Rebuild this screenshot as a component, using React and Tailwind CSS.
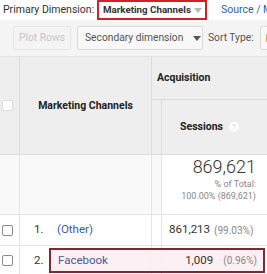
import React from 'react'

const Caret = ({ className = '' }) => (
  <svg width="8" height="5" viewBox="0 0 8 5" className={`shrink-0 ${className}`}>
    <path d="M0 0h8L4 5z" fill="currentColor" />
  </svg>
)

const Check = ({ light = false }) => (
  <div
    className={`w-[11px] h-[11px] rounded-[2px] border bg-white ${
      light ? 'border-[#dcdcdc]' : 'border-[#8a8a8a]'
    }`}
  />
)

export default function App() {
  return (
    <div
      className="w-[267px] h-[274px] overflow-hidden bg-white text-[#333] relative"
      style={{ fontFamily: 'Roboto, "Liberation Sans", sans-serif' }}
    >
      {/* Primary dimension bar */}
      <div className="h-[20px] flex items-center text-[10.5px] whitespace-nowrap overflow-hidden">
        <span className="ml-[3px] w-[94px] shrink-0">Primary Dimension:</span>
        <div className="h-[20px] w-[110px] shrink-0 border-2 border-[#d0202a] flex items-center pl-[4px] gap-[3px]">
          <span className="font-bold text-[9.75px] text-[#333]">Marketing Channels</span>
          <Caret className="text-[#b8b8b8]" />
        </div>
        <span className="ml-[14px] shrink-0 text-[#2f5fb3]">Source / M</span>
      </div>

      {/* Toolbar */}
      <div className="h-[37px] bg-[#f4f4f4] border-b border-[#e2e2e2] flex items-center pl-[13px] text-[10.25px] whitespace-nowrap overflow-hidden">
        <div className="shrink-0 h-[24px] w-[58px] rounded-[2px] border border-[#e6e6e6] bg-[#f4f4f4] flex items-center justify-center text-[#c6c6c6]">
          Plot Rows
        </div>
        <div className="shrink-0 ml-[6px] h-[24px] w-[126px] rounded-[2px] border border-[#dadada] bg-[#f8f8f8] flex items-center pl-[7px] gap-[10px] text-[#555]">
          <span>Secondary dimension</span>
          <Caret className="text-[#555]" />
        </div>
        <span className="shrink-0 ml-[5px] text-[#555]">Sort Type:</span>
        <div className="shrink-0 ml-[6px] h-[24px] w-[20px] rounded-[2px] border border-[#dadada] bg-[#f8f8f8] flex items-center pl-[5px]">
          <div className="w-[3px] h-[8px] bg-[#f0a040] rounded-[1px]" />
        </div>
      </div>

      {/* Table header */}
      <div className="grid grid-cols-[20px_132px_10px_1fr] grid-rows-[43px_54px] bg-[#eeeeee] border-b border-[#dcdcdc]">
        <div className="row-span-2 border-r border-[#dcdcdc] flex items-center pl-[2px]">
          <Check light />
        </div>
        <div className="row-span-2 border-r border-[#dcdcdc] flex items-center justify-center font-bold text-[10.5px] text-[#222]">
          Marketing Channels
        </div>
        <div className="col-span-2 border-b border-[#dcdcdc] flex items-center pl-[5px] font-bold text-[10.5px] text-[#222]">
          Acquisition
        </div>
        <div className="border-r border-[#dcdcdc]" />
        <div className="flex items-center pl-[18px] gap-[6px] font-bold text-[10.5px] text-[#222]">
          Sessions
          <span className="w-[10px] h-[10px] rounded-full bg-white text-[#d8d8d8] text-[7px] font-bold flex items-center justify-center">
            ?
          </span>
        </div>
      </div>

      {/* Totals row */}
      <div className="grid grid-cols-[20px_132px_10px_1fr] h-[60px] border-b border-[#e4e4e4] bg-[#f9f9f9]">
        <div className="border-r border-[#e4e4e4]" />
        <div className="border-r border-[#e4e4e4]" />
        <div className="border-r border-[#e4e4e4]" />
        <div className="flex flex-col items-end pr-[11px] pt-[3px] leading-none bg-white">
          <span className="text-[18px] font-light text-[#333]">869,621</span>
          <span className="text-[9px] text-[#888] mt-[4px]">% of Total:</span>
          <span className="text-[9px] text-[#888] mt-[3px]">100.00% (869,621)</span>
        </div>
      </div>

      {/* Row 1 */}
      <div className="grid grid-cols-[20px_132px_10px_1fr] h-[31px] border-b border-[#e4e4e4] text-[11.5px]">
        <div className="border-r border-[#e4e4e4] flex items-center pl-[2px]">
          <Check />
        </div>
        <div className="border-r border-[#e4e4e4] flex items-center pl-[14px]">
          <span className="w-[23px] text-[#333]">1.</span>
          <span className="text-[#3a5ba6]">(Other)</span>
        </div>
        <div className="border-r border-[#e4e4e4]" />
        <div className="flex items-center pl-[7px] whitespace-nowrap">
          <span className="text-[#333]">861,213</span>
          <span className="ml-[4px] text-[10px] text-[#888]">(99.03%)</span>
        </div>
      </div>

      {/* Row 2 */}
      <div className="grid grid-cols-[20px_132px_10px_1fr] h-[31px] text-[11.5px]">
        <div className="border-r border-[#e4e4e4] flex items-center pl-[2px] pb-[2px]">
          <Check />
        </div>
        <div className="border-r border-[#e4e4e4] flex items-center pl-[14px] pb-[2px]">
          <span className="w-[23px] text-[#333]">2.</span>
        </div>
        <div className="border-r border-[#e4e4e4]" />
        <div />
      </div>

      {/* Highlighted Facebook row */}
      <div className="absolute left-[49px] top-[248px] w-[216px] h-[25px] border-2 border-[#7a2b2b] bg-[#fdeef3]/90 flex items-center text-[11.5px] whitespace-nowrap">
        <span className="ml-[7px] text-[#4a56a0]">Facebook</span>
        <span className="ml-auto text-[#333]">1,009</span>
        <span className="ml-[10px] mr-[6px] text-[10px] text-[#888]">(0.96%)</span>
      </div>
    </div>
  )
}
